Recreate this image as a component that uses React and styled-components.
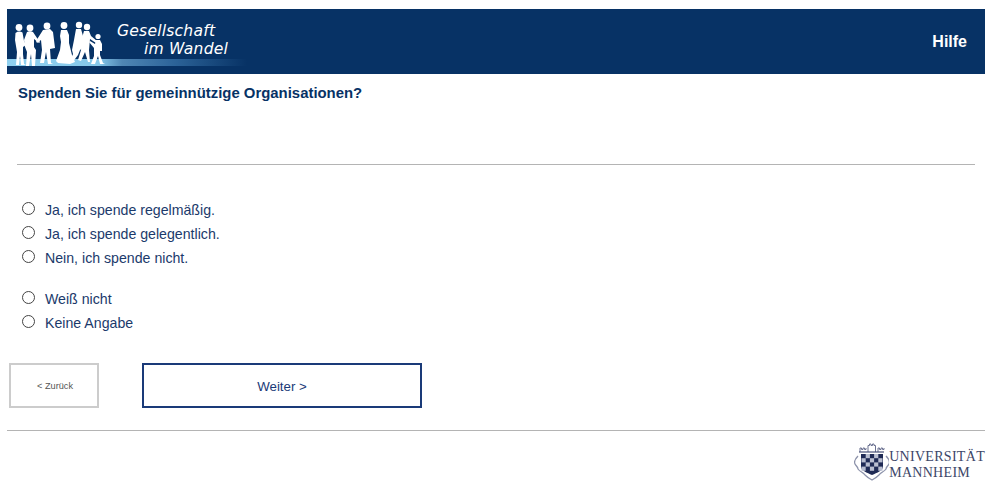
import React from "react";
import styled, { createGlobalStyle } from "styled-components";

const GlobalStyle = createGlobalStyle`
  html, body { margin: 0; padding: 0; background: #fff; }
  body { font-family: "Liberation Sans", Arial, sans-serif; }
`;

const Page = styled.div`
  width: 997px;
  height: 498px;
  box-sizing: border-box;
  padding: 9px 12px 0 7px;
  overflow: hidden;
`;

const Header = styled.header`
  height: 65px;
  background: #073265;
  display: flex;
  justify-content: space-between;
  align-items: center;
`;

const Brand = styled.div`
  position: relative;
  width: 240px;
  height: 65px;
`;

const BrandStripe = styled.div`
  position: absolute;
  left: 0;
  right: 0;
  top: 50px;
  height: 7px;
  background: linear-gradient(90deg, #8fd0ef 0, #86c8ea 38%, #4f86b4 48%, #2c6398 70%, #073265 100%);
`;

const People = styled.svg`
  position: absolute;
  left: 7px;
  top: 12px;
`;

const BrandText = styled.div`
  position: absolute;
  left: 110px;
  top: 13px;
  color: #fff;
  font: oblique 15.6px/18px "DejaVu Sans", sans-serif;
  letter-spacing: 0.2px;
  span { display: block; white-space: nowrap; }
  span + span { padding-left: 27px; }
`;

const HelpLink = styled.a`
  color: #fff;
  font-size: 16px;
  font-weight: bold;
  margin-right: 18px;
`;

const Question = styled.section`
  margin: 0 10px;
  height: 91px;
  border-bottom: 1px solid #b4b4b4;
  box-sizing: border-box;
  padding: 11px 0 0 1px;
  color: #073265;
  font-size: 14.9px;
  font-weight: bold;
  line-height: 17px;
`;

const Options = styled.div`
  margin: 33px 0 0 15px;
  display: flex;
  flex-direction: column;
`;

const Option = styled.label`
  display: flex;
  align-items: center;
  height: 24px;
  margin-top: ${(p) => (p.$gap ? "17px" : "0")};
  color: #1b3a6b;
  font-size: 14.16px;
`;

const Radio = styled.input.attrs({ type: "radio" })`
  appearance: none;
  width: 13px;
  height: 13px;
  margin: 0 10px 3px 0;
  border: 1px solid #444;
  border-radius: 50%;
  background: #fff;
`;

const Buttons = styled.div`
  display: flex;
  gap: 43px;
  margin: 28px 0 0 2px;
`;

const BackButton = styled.button`
  width: 90px;
  height: 45px;
  padding: 0 0 0 2px;
  background: #fff;
  border: 2px solid #cccccc;
  color: #555;
  font: 9.2px "Liberation Sans", sans-serif;
`;

const NextButton = styled.button`
  width: 280px;
  height: 45px;
  padding: 2px 0 0;
  background: #fff;
  border: 2px solid #1a3a78;
  color: #1a3a78;
  font: 13.3px "Liberation Sans", sans-serif;
`;

const Footer = styled.footer`
  margin-top: 22px;
  border-top: 1px solid #b4b4b4;
  display: flex;
  justify-content: flex-end;
  padding-top: 12px;
`;

const UniLogo = styled.div`
  display: flex;
  align-items: flex-start;
`;

const UniName = styled.div`
  margin-top: 6px;
  color: #3c4668;
  font: 14px/16px "Liberation Serif", serif;
  letter-spacing: 0.3px;
  span { display: block; white-space: nowrap; }
`;

// drawn in page coordinates, the viewBox starts at the top-left of the group
const figures = [
  { head: [19, 27.5, 3.4], body: "M15.5 33Q19 30.5 22.5 32.5L24 41 26 45 24.5 46 23 47 23 54 24 64 26 65 21 65 20 56 19 65 16 65 17 52 16 46 15 40z" },
  { head: [30, 28, 3.4], body: "M27 32Q30 30.5 33 32L37 38 40 42 39 43 34 39 34 47 36 50 35 66 32 66 31 54 29 66 26 66 27 52 25 47 24 40z" },
  { head: [47, 26, 3.4], body: "M43 30 50 29 53 32 55 48 50 49 51 63 53 64 48 64 46 52 44 63 40 63 42 50 41 40 37 43 36 41z" },
  { head: [64, 25.5, 3.4], body: "M61 30 67 30 69 35 69 43 72 55 75 62 70 64 58 63 56 61 60 50 61 42 60 36z" },
  { head: [79, 25, 3.2], body: "M76 29 81 29 83 36 84 47 80 50 78 55 72 63 70 61 73 54 72 50 74 40z" },
  { head: [87, 27, 3.2], body: "M84 31 89 31 91 36 97 41 96 43 90 39 89 50 90 62 88 62 85 52 81 61 78 60 81 50 82 38z" },
  { head: [98, 36.5, 2.6], body: "M96 40 100 40 102 44 102 51 100 51 100 55 103 63 105 64 100 64 98 56 95 64 91 64 94 56 94 48 89 42 90 41 95 44z" },
];

function Silhouettes() {
  return (
    <People width="92" height="47" viewBox="14 21 92 47">
      {figures.map((f, i) => (
        <g key={i} fill="#fff">
          <circle cx={f.head[0]} cy={f.head[1]} r={f.head[2]} />
          <path d={f.body} />
        </g>
      ))}
    </People>
  );
}

function Crest() {
  const cells = [];
  for (let r = 0; r < 4; r++) {
    for (let c = 0; c < 5; c++) {
      if ((r + c) % 2 === 1) {
        cells.push(<rect key={`${r}-${c}`} x={7.5 + c * 4.2} y={11 + r * 4.2} width="4.2" height="4.2" fill="#b9bed0" />);
      }
    }
  }
  return (
    <svg width="35" height="38" viewBox="0 0 35 38">
      <path d="M6 9V5h1.5v1.5H9V5h1.5v1.5H12V5M14 9V2.5h1.5V1H17v1.5h1.5V1H20v1.5h1.5V9M24 9V5h1.5v1.5H27V5h1.5v1.5H30V5" stroke="#6a7090" strokeWidth="1" fill="none" />
      <path d="M5 9h25" stroke="#4a5278" strokeWidth="1.2" />
      <path d="M4 13C1 16 0 19 1 21c1 2 3 3 3 5 2 3 5 3 7 6 2 2 5 4 7 5 2-1 5-3 7-5 2-3 5-3 7-6 0-2 2-3 3-5 1-2 0-5-3-8" stroke="#8c92aa" strokeWidth="1.3" fill="none" />
      <path d="M7 11h22v13c0 3-6 6-11 8-5-2-11-5-11-8z" fill="#1f2a55" />
      {cells}
    </svg>
  );
}

export default function App() {
  return (
    <>
      <GlobalStyle />
      <Page>
        <Header>
          <Brand>
            <BrandStripe />
            <Silhouettes />
            <BrandText>
              <span>Gesellschaft</span>
              <span>im Wandel</span>
            </BrandText>
          </Brand>
          <HelpLink>Hilfe</HelpLink>
        </Header>
        <Question>Spenden Sie für gemeinnützige Organisationen?</Question>
        <Options>
          <Option><Radio name="a" />Ja, ich spende regelmäßig.</Option>
          <Option><Radio name="a" />Ja, ich spende gelegentlich.</Option>
          <Option><Radio name="a" />Nein, ich spende nicht.</Option>
          <Option $gap><Radio name="a" />Weiß nicht</Option>
          <Option><Radio name="a" />Keine Angabe</Option>
        </Options>
        <Buttons>
          <BackButton>&lt; Zurück</BackButton>
          <NextButton>Weiter &gt;</NextButton>
        </Buttons>
        <Footer>
          <UniLogo>
            <Crest />
            <UniName>
              <span>UNIVERSITÄT</span>
              <span>MANNHEIM</span>
            </UniName>
          </UniLogo>
        </Footer>
      </Page>
    </>
  );
}
